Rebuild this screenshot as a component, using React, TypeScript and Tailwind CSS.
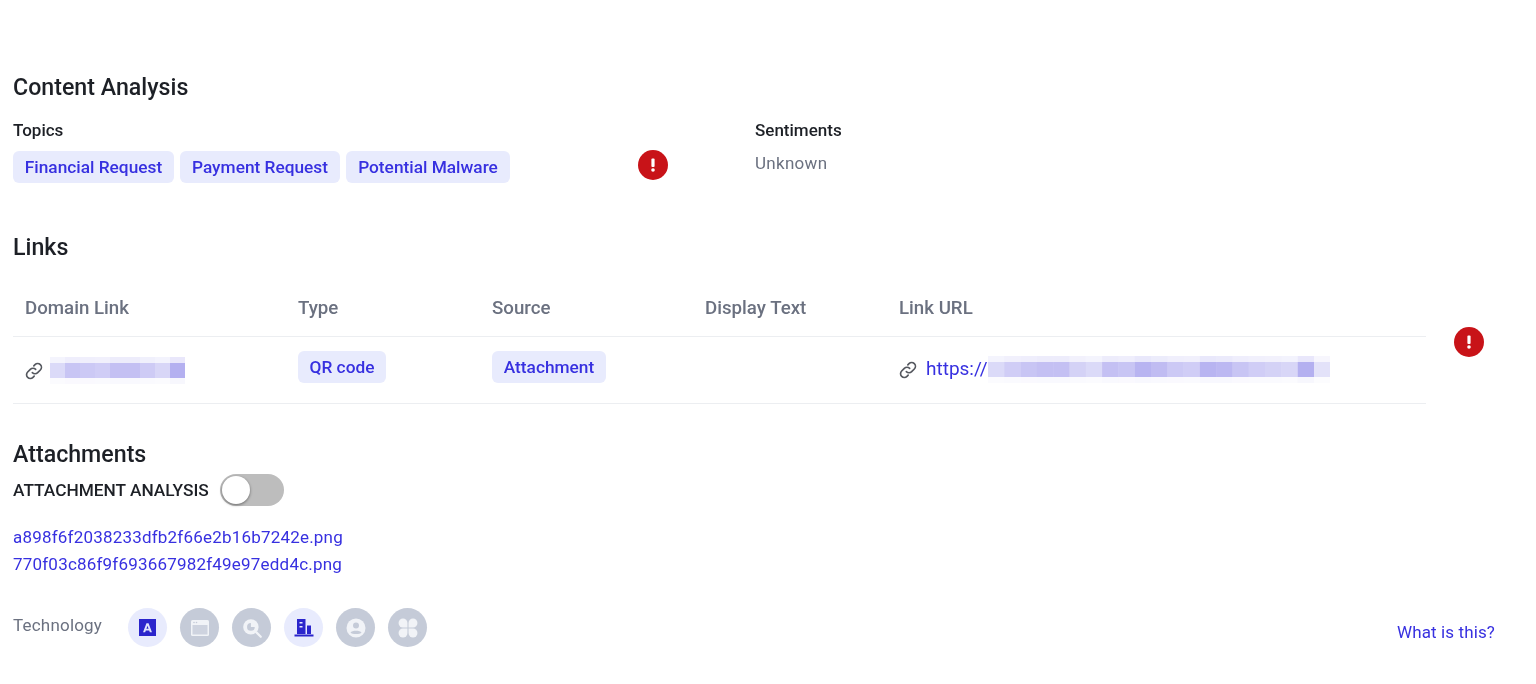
const Alert = () => (
  <span className="flex h-[30px] w-[30px] items-center justify-center rounded-full bg-[#c81318]">
    <svg width="6" height="16" viewBox="0 0 6 16"><rect x="1.4" y="1.500" width="3.2" height="8.500" rx="1" fill="#fff" /><circle cx="3" cy="13" r="1.800" fill="#fff" /></svg>
  </span>
);

const Chip = ({ children, w }: { children: string; w: string }) => (
  <span className={`flex h-8 items-center justify-center rounded-md bg-[#e8ebfd] pt-[2px] text-[17.3px] font-medium text-[#3730e0] ${w}`}>{children}</span>
);

const LinkIcon = () => (
  <svg width="20" height="20" viewBox="0 0 24 24" fill="none" stroke="#55585f" strokeWidth="2" strokeLinecap="round" strokeLinejoin="round" className="-ml-px">
    <path d="M10 14a4.5 4.5 0 0 0 6.4 0l3.2-3.2a4.5 4.5 0 0 0-6.4-6.4l-1.4 1.4" />
    <path d="M14 10a4.5 4.5 0 0 0-6.4 0l-3.2 3.2a4.5 4.5 0 0 0 6.4 6.4l1.4-1.4" />
  </svg>
);

const Redacted = ({ shades, cell = 16 }: { shades: number[]; cell?: number }) => (
  <svg width={shades.length * cell} height="30" viewBox={`0 0 ${shades.length * cell} 30`} className="block">
    {shades.map((s, i) => (
      <g key={i}>
        <rect x={i * cell} y="1" width={cell} height="6" fill="#3a30d8" opacity={s * 0.3} />
        <rect x={i * cell} y="7" width={cell} height="15" fill="#3a30d8" opacity={s} />
        <rect x={i * cell} y="22" width={cell} height="6" fill="#3a30d8" opacity={s * 0.1} />
      </g>
    ))}
  </svg>
);

const TechIcon = ({ active, children }: { active?: boolean; children: React.ReactNode }) => (
  <span className={`flex h-[39px] w-[39px] items-center justify-center rounded-full ${active ? "bg-[#e8ebfd]" : "bg-[#c5cbd8]"}`}>{children}</span>
);

export default function App() {
  return (
    <div className="relative h-[684px] w-[1536px] overflow-hidden bg-white pl-[13px] pt-[72px] font-['Roboto',sans-serif] text-[#1d2026] blur-[0.5px]">
      <h2 className="text-[23.2px] font-medium leading-[30px]">Content Analysis</h2>

      <div className="mt-[18px] flex">
        <div className="w-[625px]">
          <div className="text-[17px] font-medium leading-[20px]">Topics</div>
          <div className="mt-[11px] flex gap-[6px]">
            <Chip w="w-[161px]">Financial Request</Chip>
            <Chip w="w-[160px]">Payment Request</Chip>
            <Chip w="w-[164px]">Potential Malware</Chip>
          </div>
        </div>
        <div className="mt-[30px]"><Alert /></div>
        <div className="ml-[87px]">
          <div className="text-[17px] font-medium leading-[20px]">Sentiments</div>
          <div className="mt-[13px] text-[17px] leading-[20px] tracking-[0.3px] text-[#6b7180]">Unknown</div>
        </div>
      </div>

      <h2 className="mt-[49px] text-[23.2px] font-medium leading-[30px]">Links</h2>

      <div className="flex">
        <div className="mt-[19px] w-[1413px]">
          <div className="grid h-[56px] grid-cols-[273px_194px_213px_194px_1fr] items-center border-b border-[#eceef1] pl-3 text-[18.7px] font-medium text-[#6b7180]">
            <span>Domain Link</span><span>Type</span><span>Source</span><span>Display Text</span><span>Link URL</span>
          </div>
          <div className="grid h-[67px] grid-cols-[273px_194px_213px_194px_1fr] items-center border-b border-[#eceef1] pl-3">
            <span className="flex items-center gap-[6px] pt-[1px]"><LinkIcon /><Redacted cell={15} shades={[0.18,0.28,0.26,0.24,0.3,0.3,0.25,0.2,0.38]} /></span>
            <span className="-mt-[7px] flex"><Chip w="w-[88px]">QR code</Chip></span>
            <span className="-mt-[7px] flex"><Chip w="w-[114px]">Attachment</Chip></span>
            <span />
            <span className="flex items-center gap-[8px]">
              <LinkIcon />
              <span className="-mt-[2px] text-[19px] text-[#3730e0]">https://</span>
              <span className="-ml-[8px]"><Redacted shades={[0.18,0.24,0.28,0.3,0.3,0.22,0.18,0.3,0.28,0.36,0.32,0.26,0.24,0.36,0.34,0.28,0.24,0.22,0.2,0.38,0.14]} cell={16.3} /></span>
            </span>
          </div>
        </div>
        <div className="ml-[28px] mt-[65px] h-[30px]"><Alert /></div>
      </div>

      <h2 className="mt-[35px] text-[23.2px] font-medium leading-[30px]">Attachments</h2>
      <div className="mt-[5px] flex items-center gap-[11px]">
        <span className="text-[17.3px] font-medium leading-[32px]">ATTACHMENT ANALYSIS</span>
        <span className="relative h-[32px] w-[64px] rounded-full bg-[#bdbdbd]">
          <span className="absolute left-[2px] top-[2px] h-[28px] w-[28px] rounded-full bg-white shadow-[0_1px_3px_rgba(0,0,0,0.45)]" />
        </span>
      </div>

      <div className="mt-[18px] text-[17px] leading-[27px] tracking-[0.2px] text-[#3730e0]">
        <div>a898f6f2038233dfb2f66e2b16b7242e.png</div>
        <div>770f03c86f9f693667982f49e97edd4c.png</div>
      </div>

      <div className="mt-[30px] flex items-center">
        <span className="mb-[6px] w-[115px] text-[17px] leading-[20px] tracking-[0.2px] text-[#6b7180]">Technology</span>
        <div className="flex gap-[13px]">
          <TechIcon active>
            <svg width="17" height="17" viewBox="0 0 16 16"><rect width="16" height="16" fill="#2b25cc" /><path d="M3.800 12.500 7 4h2l3.200 8.500h-2l-.6-1.700H6.400l-.6 1.700ZM7 9.200h2L8 6.300Z" fill="#dfe3fb" /></svg>
          </TechIcon>
          <TechIcon>
            <svg width="18" height="16" viewBox="0 0 18 16"><rect width="18" height="16" rx="1.500" fill="#f1f3f7" /><rect x="1.500" y="5" width="15" height="9.500" fill="#c5cbd8" opacity="0.8" /><circle cx="3" cy="2.500" r="0.800" fill="#c5cbd8" /><circle cx="5.500" cy="2.500" r="0.800" fill="#c5cbd8" /></svg>
          </TechIcon>
          <TechIcon>
            <svg width="22" height="22" viewBox="0 0 20 20"><circle cx="9" cy="9" r="7" fill="#f1f3f7" /><path d="M9 5.500v3.500h3.500a3.500 3.500 0 1 1-3.500-3.500Z" fill="#c5cbd8" /><path d="m14 14 4 4" stroke="#f1f3f7" strokeWidth="2" strokeLinecap="round" /></svg>
          </TechIcon>
          <TechIcon active>
            <svg width="20" height="20" viewBox="0 0 20 20" fill="#2b25cc"><path d="M3 1h8.500v15H3z" /><path d="M13 7.500h4V16h-4z" /><rect x="0.500" y="16.500" width="19" height="2" /><rect x="5.500" y="4" width="3" height="1.500" fill="#e8ebfd" /><rect x="5.500" y="8" width="3" height="1.500" fill="#e8ebfd" /></svg>
          </TechIcon>
          <TechIcon>
            <svg width="20" height="20" viewBox="0 0 20 20"><circle cx="10" cy="10" r="9.500" fill="#f1f3f7" /><circle cx="10" cy="7.500" r="3" fill="#c5cbd8" /><path d="M4.500 14.500c1.500-2.500 9.500-2.500 11 0-1.500 2-9.500 2-11 0Z" fill="#c5cbd8" /></svg>
          </TechIcon>
          <TechIcon>
            <svg width="20" height="20" viewBox="0 0 18 18" fill="#f1f3f7"><path d="M4.500 0.500a4 4 0 0 1 4 4v4h-4a4 4 0 0 1 0-8Z" /><path d="M13.500 0.500a4 4 0 0 0-4 4v4h4a4 4 0 0 0 0-8Z" /><path d="M4.500 17.500a4 4 0 0 0 4-4v-4h-4a4 4 0 0 0 0 8Z" /><path d="M13.500 17.500a4 4 0 0 1-4-4v-4h4a4 4 0 0 1 0 8Z" /></svg>
          </TechIcon>
        </div>
        <span className="ml-auto mr-[41px] mt-[11px] text-[17px] tracking-[0.12px] text-[#3730e0]">What is this?</span>
      </div>
    </div>
  );
}
